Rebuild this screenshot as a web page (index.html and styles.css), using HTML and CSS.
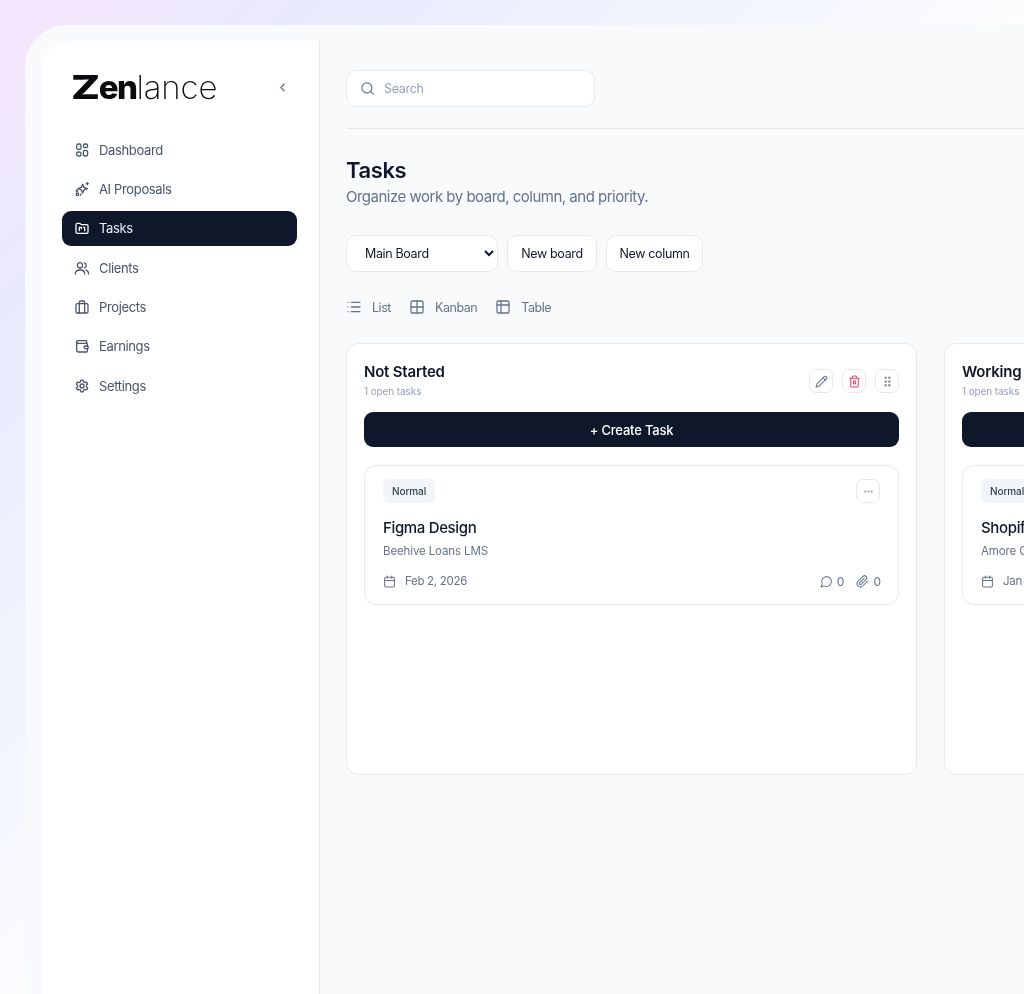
FILE: index.html
```html
<!DOCTYPE html>
<html lang="en">
<head>
<meta charset="utf-8">
<title>Tasks - Zenlance</title>
<link rel="stylesheet" href="styles.css">
</head>
<body>
<div class="page">
  <div class="frame">
    <aside class="sidebar">
      <div class="brand">
        <div class="logo"><b><span class="logo-z">Z</span>en</b><span class="logo-thin">lance</span></div>
        <svg class="chev" viewBox="0 0 24 24"><path d="M15 6l-6 6 6 6"/></svg>
      </div>
      <nav class="nav">
        <a class="nav-item"><svg class="ic" viewBox="0 0 24 24"><rect x="4" y="3" width="6.5" height="8" rx="2.5"/><rect x="14" y="3" width="6.5" height="5.5" rx="2.5"/><rect x="4" y="15" width="6.5" height="6" rx="2.8"/><rect x="14" y="12.5" width="6.5" height="8.5" rx="3"/></svg>Dashboard</a>
        <a class="nav-item"><svg class="ic" viewBox="0 0 24 24"><path d="M13 5l1.9 4.6L20 11.5l-5.1 1.9L13 18l-1.9-4.6L6 11.5l5.1-1.9z"/><path d="M20 2.5v3M18.5 4h3"/><circle cx="5" cy="20" r="2"/><circle cx="4.5" cy="14.5" r="1"/><path d="M10.5 19.5l-1 2"/></svg>AI Proposals</a>
        <a class="nav-item active"><svg class="ic" viewBox="0 0 24 24"><path d="M3 7a2 2 0 0 1 2-2h4l2 2h8a2 2 0 0 1 2 2v9a2 2 0 0 1-2 2H5a2 2 0 0 1-2-2z"/><path d="M8 16v-5M8 11h3v2M14 11h2v5"/></svg>Tasks</a>
        <a class="nav-item"><svg class="ic" viewBox="0 0 24 24"><circle cx="9" cy="8" r="4"/><path d="M2 21v-1a6 6 0 0 1 6-5h2a6 6 0 0 1 6 5v1"/><path d="M15.5 4.2a4 4 0 0 1 0 7.6M18 15.2a6 6 0 0 1 4 5.8"/></svg>Clients</a>
        <a class="nav-item"><svg class="ic" viewBox="0 0 24 24"><rect x="3" y="7" width="18" height="14" rx="2"/><path d="M8 21V5a2 2 0 0 1 2-2h4a2 2 0 0 1 2 2v16"/></svg>Projects</a>
        <a class="nav-item"><svg class="ic" viewBox="0 0 24 24"><path d="M19 7V5a1 1 0 0 0-1-1H6a2 2 0 0 0-2 2v12a3 3 0 0 0 3 3h12a1 1 0 0 0 1-1v-3"/><path d="M4 6a2 2 0 0 0 2 2h13a1 1 0 0 1 1 1v3"/><path d="M21 12h-4a2 2 0 0 0 0 4h4z"/></svg>Earnings</a>
        <a class="nav-item"><svg class="ic" viewBox="0 0 24 24"><path d="M10.3 3.2h3.4l.6 2.6 2 1.1 2.6-.8 1.7 3-2 1.8v2.2l2 1.8-1.7 3-2.6-.8-2 1.1-.6 2.6h-3.4l-.6-2.6-2-1.1-2.6.8-1.7-3 2-1.8v-2.2l-2-1.8 1.7-3 2.6.8 2-1.1z"/><circle cx="12" cy="12" r="3"/></svg>Settings</a>
      </nav>
    </aside>
    <main class="main">
      <div class="topbar">
        <label class="search">
          <svg class="ic ic-search" viewBox="0 0 24 24"><circle cx="11" cy="11" r="8"/><path d="M21 21l-4.3-4.3"/></svg>
          <span>Search</span>
        </label>
      </div>
      <header class="head">
        <h1>Tasks</h1>
        <p>Organize work by board, column, and priority.</p>
      </header>
      <div class="controls">
        <select class="select"><option>Main Board</option></select>
        <button class="btn">New board</button>
        <button class="btn btn-col">New column</button>
      </div>
      <div class="views">
        <span class="view"><svg class="ic" viewBox="0 0 24 24"><path d="M8 5h13M8 12h13M8 19h13M3 5h.01M3 12h.01M3 19h.01"/></svg>List</span>
        <span class="view"><svg class="ic" viewBox="0 0 24 24"><rect x="3" y="3" width="18" height="18" rx="2"/><path d="M12 3v18M3 12h18"/></svg>Kanban</span>
        <span class="view"><svg class="ic" viewBox="0 0 24 24"><rect x="3" y="3" width="18" height="18" rx="2"/><path d="M3 9h18M9 3v18"/></svg>Table</span>
      </div>
      <div class="board">
        <section class="column">
          <div class="col-head">
            <div>
              <h2>Not Started</h2>
              <div class="count">1 open tasks</div>
            </div>
            <div class="col-actions">
              <button class="icon-btn"><svg class="ic ic-sm" viewBox="0 0 24 24"><path d="M17 3a2.8 2.8 0 0 1 4 4L7.5 20.5 2 22l1.5-5.5z"/><path d="M15 5l4 4"/></svg></button>
              <button class="icon-btn danger"><svg class="ic ic-sm" viewBox="0 0 24 24"><path d="M3 6h18M8 6V4a2 2 0 0 1 2-2h4a2 2 0 0 1 2 2v2M19 6v14a2 2 0 0 1-2 2H7a2 2 0 0 1-2-2V6"/><rect x="10" y="11" width="4" height="5"/></svg></button>
              <button class="icon-btn"><svg class="ic ic-grip ic-fill" viewBox="0 0 24 24"><circle cx="9" cy="6" r="2"/><circle cx="15" cy="6" r="2"/><circle cx="9" cy="12" r="2"/><circle cx="15" cy="12" r="2"/><circle cx="9" cy="18" r="2"/><circle cx="15" cy="18" r="2"/></svg></button>
            </div>
          </div>
          <button class="create">+ Create Task</button>
          <article class="card">
            <div class="card-top">
              <span class="tag">Normal</span>
              <button class="icon-btn"><svg class="ic ic-sm ic-fill" viewBox="0 0 24 24"><circle cx="6" cy="12" r="1.8"/><circle cx="12" cy="12" r="1.8"/><circle cx="18" cy="12" r="1.8"/></svg></button>
            </div>
            <h3>Figma Design</h3>
            <div class="client">Beehive Loans LMS</div>
            <div class="card-foot">
              <span class="date"><svg class="ic ic-sm" viewBox="0 0 24 24"><rect x="3" y="4" width="18" height="18" rx="2"/><path d="M16 2v4M8 2v4M3 10h18"/></svg>Feb 2, 2026</span>
              <span class="meta">
                <span class="stat"><svg class="ic ic-sm" viewBox="0 0 24 24"><path d="M7.9 20A9 9 0 1 0 4 16.1L2 22z"/></svg>0</span>
                <span class="stat"><svg class="ic ic-sm" viewBox="0 0 24 24"><path d="M21.4 11.1l-9.2 9.2a6 6 0 0 1-8.5-8.5l9.2-9.2a4 4 0 0 1 5.7 5.7l-9.2 9.2a2 2 0 0 1-2.8-2.8l8.5-8.5"/></svg>0</span>
              </span>
            </div>
          </article>
        </section>
        <section class="column">
          <div class="col-head">
            <div>
              <h2>Working</h2>
              <div class="count">1 open tasks</div>
            </div>
          </div>
          <button class="create">+ Create Task</button>
          <article class="card">
            <div class="card-top">
              <span class="tag">Normal</span>
              <button class="icon-btn"><svg class="ic ic-sm ic-fill" viewBox="0 0 24 24"><circle cx="6" cy="12" r="1.8"/><circle cx="12" cy="12" r="1.8"/><circle cx="18" cy="12" r="1.8"/></svg></button>
            </div>
            <h3>Shopify Store</h3>
            <div class="client">Amore Cafe</div>
            <div class="card-foot">
              <span class="date"><svg class="ic ic-sm" viewBox="0 0 24 24"><rect x="3" y="4" width="18" height="18" rx="2"/><path d="M16 2v4M8 2v4M3 10h18"/></svg>Jan 28, 2026</span>
            </div>
          </article>
        </section>
      </div>
    </main>
  </div>
</div>
</body>
</html>
```
FILE: styles.css
```css
* { box-sizing: border-box; }
html, body { margin: 0; height: 100%; overflow: hidden; }
body {
  font-family: Inter, "Noto Sans", sans-serif;
  color: #0f172a;
  background: linear-gradient(135deg, #f6e6fd 0%, #e9e9fd 15%, #f1f4fe 35%, #fcfcff 50%, #ffffff 100%);
}
.page { height: 994px; width: 1024px; padding: 25px 0 0 25px; overflow: hidden; filter: blur(0.35px); }
.frame {
  display: flex;
  width: 1240px;
  height: 969px;
  padding: 16px 0 0 16px;
  background: #f8fafc;
  border-radius: 42px 0 0 0;
}
.sidebar {
  width: 279px;
  flex: none;
  background: #fff;
  border-right: 1px solid #e4e8ee;
  border-radius: 30px 0 0 0;
  padding: 29px 22px 0 21px;
}
.brand { display: flex; align-items: center; justify-content: space-between; height: 34px; padding: 0 8px 0 9px; }
.logo { font-size: 33px; line-height: 34px; color: #0b0b0f; white-space: nowrap; }
.logo b { font-weight: 800; letter-spacing: -1.6px; }
.logo-z { display: inline-block; margin-right: 7px; transform: scaleX(1.3); transform-origin: left center; }
.logo-thin { font-weight: 200; letter-spacing: -0.1px; }
.chev { width: 13px; height: 13px; fill: none; stroke: #64748b; stroke-width: 2.4; stroke-linecap: round; stroke-linejoin: round; }
.nav { display: flex; flex-direction: column; gap: 4.4px; margin-top: 28px; }
.nav-item {
  display: flex; align-items: center; gap: 9px;
  height: 35px; padding: 0 12px;
  border-radius: 8px;
  font-size: 13px; letter-spacing: -0.35px;
  color: #475569;
}
.nav-item.active { background: #0f172a; color: #e8edf4; border-radius: 9px; }
.ic { width: 16px; height: 16px; flex: none; fill: none; stroke: #64748b; stroke-width: 1.9; stroke-linecap: round; stroke-linejoin: round; }
.nav-item .ic { stroke: #475569; }
.nav-item.active .ic { stroke: #fff; }
.ic-sm { width: 13px; height: 13px; }
.ic-grip { width: 15px; height: 15px; }
.ic-fill { fill: #8592a6; stroke: none; }
.main { flex: 1; padding: 29px 0 0 26px; min-width: 0; }
.topbar { height: 59px; border-bottom: 1px solid #e4e8ee; }
.search {
  display: flex; align-items: center; gap: 9px;
  width: 249px; height: 37px; padding: 0 13px;
  background: #fff; border: 1px solid #e6eaef; border-radius: 10px;
  font-size: 12.5px; letter-spacing: -0.3px; color: #94a3b8;
}
.ic-search { width: 15px; height: 15px; }
.head { margin-top: 27px; }
h1 { margin: 0; font-size: 22px; line-height: 28px; font-weight: 600; letter-spacing: -0.4px; color: #0f172a; }
.head p { margin: 2px 0 0; font-size: 15px; line-height: 22px; letter-spacing: -0.5px; color: #64748b; }
.controls { display: flex; gap: 9px; margin-top: 27px; align-items: center; }
.select {
  width: 152px; height: 37px; padding: 0 0 0 14px;
  background: #fff; border: 1px solid #e6eaef; border-radius: 10px;
  font: 12.5px Inter, sans-serif; letter-spacing: -0.35px; color: #0f172a;
}
.btn {
  width: 90px; height: 37px; padding: 0;
  background: #fff; border: 1px solid #e6eaef; border-radius: 10px;
  font: 12.5px Inter, sans-serif; letter-spacing: -0.35px; color: #0f172a;
}
.btn-col { width: 97px; }
.views { display: flex; gap: 18px; margin-top: 26px; height: 18px; align-items: center; }
.view { display: flex; align-items: center; gap: 10px; font-size: 12.5px; letter-spacing: -0.45px; color: #64748b; }
.board { display: flex; gap: 27px; margin-top: 27px; }
.column {
  flex: none; width: 571px; height: 432px; padding: 18px 17px;
  background: #fff; border: 1px solid #e6eaef; border-radius: 12px;
}
.col-head { display: flex; justify-content: space-between; align-items: flex-start; height: 50px; }
h2 { margin: 0; font-size: 15px; line-height: 20px; font-weight: 600; letter-spacing: -0.2px; color: #0f172a; }
.count { margin-top: 2px; font-size: 10px; line-height: 14px; letter-spacing: -0.1px; color: #94a3b8; }
.col-actions { display: flex; gap: 9px; margin-top: 7px; }
.icon-btn {
  display: flex; align-items: center; justify-content: center;
  width: 24px; height: 24px; padding: 0;
  background: #fff; border: 1px solid #e6eaef; border-radius: 7px;
}
.danger .ic { stroke: #f43f5e; }
.create {
  display: block; width: 100%; height: 35px; padding: 0;
  background: #0f172a; color: #fff; border: 0; border-radius: 9px;
  font: 500 13px Inter, sans-serif; letter-spacing: -0.2px;
}
.card {
  margin-top: 18px; height: 140px; padding: 13px 18px 0;
  background: #fff; border: 1px solid #e6eaef; border-radius: 12px;
}
.card-top { display: flex; justify-content: space-between; align-items: center; height: 24px; }
.tag {
  display: flex; align-items: center; height: 24px; padding: 0 9px;
  background: #f1f5f9; border-radius: 6px;
  font-size: 10px; font-weight: 500; letter-spacing: -0.1px; color: #334155;
}
h3 { margin: 14px 0 0; font-size: 15px; line-height: 22px; font-weight: 500; letter-spacing: -0.35px; color: #0f172a; }
.client { margin-top: 4px; font-size: 11.5px; line-height: 16px; letter-spacing: -0.12px; color: #64748b; }
.card-foot { display: flex; justify-content: space-between; align-items: center; margin-top: 14px; height: 16px; font-size: 12px; color: #64748b; }
.date { display: flex; align-items: center; gap: 9px; white-space: nowrap; font-size: 11.5px; letter-spacing: -0.3px; }
.meta { display: flex; gap: 12px; margin-right: -1px; }
.stat { display: flex; align-items: center; gap: 4px; }
```
